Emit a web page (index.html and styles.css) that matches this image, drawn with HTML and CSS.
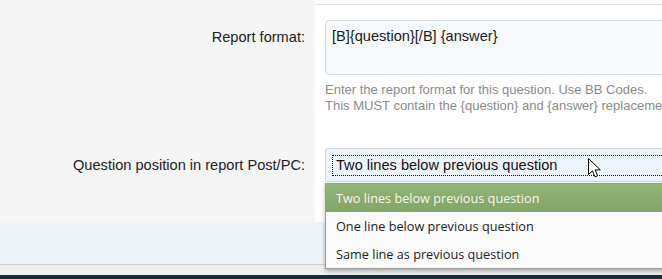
FILE: index.html
```html
<!DOCTYPE html>
<html>
<head>
<meta charset="utf-8">
<link rel="stylesheet" href="styles.css">
</head>
<body>
<div class="page">
  <div class="form">
    <div class="label-cell spacer"></div>
    <div class="value-cell top-rule"></div>

    <div class="label-cell row1-label">Report format:</div>
    <div class="value-cell row1-value">
      <div class="textarea">[B]{question}[/B] {answer}</div>
      <div class="help">Enter the report format for this question. Use BB Codes.<br>This MUST contain the {question} and {answer} replacement variables.</div>
    </div>

    <div class="label-cell row2-label">Question position in report Post/PC:</div>
    <div class="value-cell row2-value">
      <div class="select"><span class="select-focus">Two lines below previous question</span></div>
    </div>
  </div>
  <div class="footer"></div>
  <div class="strip"></div>
  <div class="navbar"></div>

  <ul class="dropdown">
    <li class="option selected">Two lines below previous question</li>
    <li class="option">One line below previous question</li>
    <li class="option">Same line as previous question</li>
  </ul>

  <svg class="cursor" width="14" height="20" viewBox="0 0 14 20">
    <path d="M0.5 0.5 L0.5 16.5 L4.4 12.8 L7 18.8 L9.6 17.7 L7.1 11.9 L12.3 11.9 Z" fill="#fff" stroke="#000" stroke-width="1" stroke-linejoin="miter"/>
  </svg>
</div>
</body>
</html>
```

FILE: styles.css
```css
html, body {
  margin: 0;
  padding: 0;
}
body {
  width: 662px;
  height: 279px;
  overflow: hidden;
  background: #f0f0f0;
  font-family: "Liberation Sans", Arial, sans-serif;
}
.page {
  position: relative;
  width: 662px;
  height: 279px;
  overflow: hidden;
}
.form {
  display: grid;
  grid-template-columns: 315px 347px;
}
.label-cell {
  background: #f5f5f5;
  border-right: 1px solid #e4e4e4;
  text-align: right;
  padding-right: 10px;
  font-size: 14.6px;
  line-height: 17px;
  color: #222;
  box-sizing: border-box;
  width: 316px;
}
.value-cell {
  background: #fff;
  padding-left: 10px;
  box-sizing: border-box;
  overflow: hidden;
}
.spacer {
  height: 5px;
}
.top-rule {
  height: 5px;
  border-bottom: 1px solid #e2e2e2;
}
.row1-label {
  padding-top: 24px;
}
.row1-value {
  padding-top: 15px;
  padding-bottom: 26px;
}
.textarea {
  box-sizing: border-box;
  width: 400px;
  height: 55px;
  border: 1px solid #d6dce3;
  border-radius: 4px;
  background: #f6f9fc;
  padding: 7px 6px;
  font-size: 14.6px;
  line-height: 17px;
  color: #1a1a1a;
  white-space: nowrap;
}
.help {
  margin-top: 7px;
  font-size: 13px;
  line-height: 16px;
  color: #8a8a8a;
  white-space: nowrap;
}
.row2-label {
  padding-top: 17px;
}
.row2-value {
  padding-top: 8px;
  padding-bottom: 40px;
}
.select {
  box-sizing: border-box;
  width: 400px;
  height: 34px;
  border: 1px solid #cdd6df;
  border-radius: 3px;
  background: #eef4fb;
  padding: 6px 6px 5px 6px;
}
.select-focus {
  display: block;
  box-sizing: border-box;
  height: 21px;
  padding: 2px 4px;
  outline: 1px dotted #111;
  outline-offset: -1px;
  font-size: 14.6px;
  line-height: 17px;
  color: #111;
  white-space: nowrap;
}
.footer {
  height: 42px;
  background: #eef3fa;
  border-bottom: 1px solid #d2d2d2;
}
.strip {
  height: 10px;
  background: #efefef;
}
.navbar {
  height: 20px;
  background: #172b45;
}
.dropdown {
  position: absolute;
  left: 325px;
  top: 183px;
  width: 400px;
  margin: 0;
  padding: 0;
  list-style: none;
  background: #fafafa;
  border: 1px solid #9a9a9a;
  box-shadow: 0 2px 4px rgba(0, 0, 0, 0.3);
  font-family: "Open Sans", "Noto Sans", sans-serif;
  font-size: 12.7px;
}
.option {
  height: 28px;
  line-height: 28px;
  padding-left: 10px;
  color: #222;
  white-space: nowrap;
}
.option.selected {
  background: linear-gradient(#93b478, #82a566);
  color: #f2f7ea;
}
.cursor {
  position: absolute;
  left: 588px;
  top: 158px;
}
```
